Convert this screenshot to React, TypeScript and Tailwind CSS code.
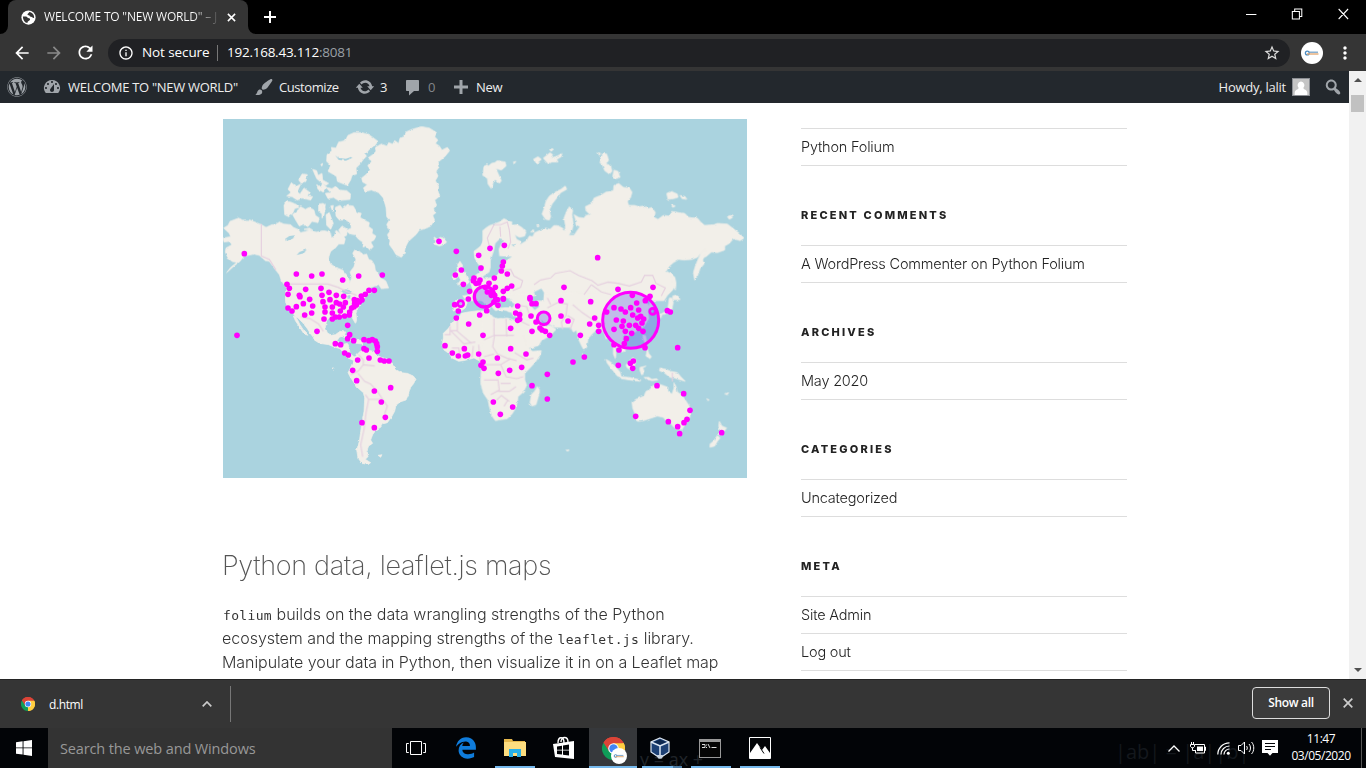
import React from 'react';
import { FaWordpress, FaEdgeLegacy } from 'react-icons/fa6';
import { MdOutlineStarBorder, MdArrowBack, MdArrowForward, MdRefresh, MdInfoOutline, MdMoreVert } from 'react-icons/md';

const UI = "font-['Open_Sans','Noto_Sans',sans-serif]";

function DashIcon({ d }: { d: string }) {
  return (
    <svg viewBox="0 0 20 20" className="h-5 w-5 shrink-0 fill-[#a0a5aa]">
      <path d={d} />
    </svg>
  );
}

const DASHBOARD =
  'M3.76 16h12.48A7.998 7.998 0 0 0 10 3a7.998 7.998 0 0 0-6.24 13zM10 4c.55 0 1 .45 1 1s-.45 1-1 1-1-.45-1-1 .45-1 1-1zM6 6c.55 0 1 .45 1 1s-.45 1-1 1-1-.45-1-1 .45-1 1-1zm8 0c.55 0 1 .45 1 1s-.45 1-1 1-1-.45-1-1 .45-1 1-1zm-5.37 5.55L12 7v6c0 1.1-.9 2-2 2s-2-.9-2-2c0-.57.24-1.08.63-1.45zM4 10c.55 0 1 .45 1 1s-.45 1-1 1-1-.45-1-1 .45-1 1-1zm12 0c.55 0 1 .45 1 1s-.45 1-1 1-1-.45-1-1 .45-1 1-1z';
const BRUSH =
  'M18.33 3.57s.27-.8-.31-1.36c-.53-.52-1.22-.24-1.22-.24-.61.3-5.76 3.47-7.67 5.57-.86.96-2.06 3.79-1.09 4.82.92.98 3.96-.17 4.79-1 2.06-2.06 5.21-7.17 5.5-7.79zM1.4 17.65c2.37-1.56 1.46-3.41 3.23-4.64.93-.65 2.22-.62 3.08.29.63.67.8 2.57-.16 3.46-1.57 1.45-4 1.55-6.15.89z';
const UPDATE =
  'M10.2 3.28c3.53 0 6.43 2.61 6.92 6h2.08l-3.5 4-3.5-4h2.32c-.45-1.97-2.21-3.45-4.32-3.45-1.45 0-2.73.71-3.54 1.78L4.95 5.66C6.23 4.2 8.11 3.28 10.2 3.28zm-.4 13.44c-3.52 0-6.43-2.61-6.92-6H.8l3.5-4c1.17 1.33 2.33 2.67 3.5 4H5.48c.45 1.97 2.21 3.45 4.32 3.45 1.45 0 2.73-.71 3.54-1.78l1.71 1.95c-1.28 1.46-3.15 2.38-5.25 2.38z';
const COMMENT = 'M4 3h11c.6 0 1 .4 1 1v9c0 .6-.4 1-1 1h-4l-5 4.500v-4.500H4c-.6 0-1-.4-1-1V4c0-.6.4-1 1-1z';
const PLUS = 'M17 8.500v3h-5.500V17h-3v-5.500H3v-3h5.500V3h3v5.500z';
const SEARCH =
  'M12.14 4.18c1.87 1.87 2.11 4.75.72 6.89.12.1.22.21.36.31.2.16.47.36.81.59.34.24.56.39.66.47.42.31.73.57.94.78.32.32.6.65.84 1 .25.35.44.69.59 1.04.14.35.21.68.18 1-.02.32-.14.59-.36.81s-.49.34-.81.36c-.31.02-.65-.04-.99-.19-.35-.14-.7-.34-1.04-.59-.35-.24-.68-.52-1-.84-.21-.21-.47-.52-.77-.93-.1-.13-.25-.35-.47-.66-.22-.32-.4-.57-.56-.78-.16-.2-.29-.35-.44-.5-2.07 1.09-4.69.76-6.44-.98-2.14-2.15-2.14-5.64 0-7.78 2.15-2.15 5.63-2.15 7.78 0zm-1.41 6.36c1.36-1.37 1.36-3.58 0-4.95-1.37-1.37-3.59-1.37-4.95 0-1.37 1.37-1.37 3.58 0 4.95 1.36 1.37 3.58 1.37 4.95 0z';

function KeyBadge({ className }: { className: string }) {
  return (
    <svg viewBox="0 0 22 22" className={className}>
      <circle cx="11" cy="11" r="11" fill="#fff" />
      <circle cx="6.300" cy="11" r="1.900" fill="none" stroke="#4a8ac0" strokeWidth="1.300" />
      <path d="M8 10.200h9" stroke="#6d9cc4" strokeWidth="1.200" />
      <path d="M6 12h11.500" stroke="#e2a56b" strokeWidth="1.300" />
    </svg>
  );
}

function ChromeLogo({ className }: { className: string }) {
  return (
    <svg viewBox="0 0 24 24" className={className}>
      <path d="M12 12 1.600 6A12 12 0 0 1 22.400 6z" fill="#db4437" />
      <path d="M12 12 22.400 6A12 12 0 0 1 12 24z" fill="#ffcd40" />
      <path d="M12 12v12A12 12 0 0 1 1.600 6z" fill="#0f9d58" />
      <path d="M12 6.500h10.700L22.400 6A12 12 0 0 0 1.600 6l5.600 8.700z" fill="#db4437" />
      <path d="M16.800 14.700 12 24A12 12 0 0 0 22.700 6.500H12z" fill="#ffcd40" />
      <circle cx="12" cy="12" r="5.500" fill="#fff" />
      <circle cx="12" cy="12" r="4.400" fill="#4285f4" />
    </svg>
  );
}

function TitleBar() {
  return (
    <div className="flex h-[34px] bg-black pl-2">
      <div className="relative flex h-[34px] w-60 items-center rounded-t-lg bg-[#353535] pl-[13px]">
        <svg viewBox="0 0 8 8" className="absolute -left-2 bottom-0 h-2 w-2 fill-[#353535]">
          <path d="M8 0v8H0a8 8 0 0 0 8-8z" />
        </svg>
        <svg viewBox="0 0 8 8" className="absolute -right-2 bottom-0 h-2 w-2 fill-[#353535]">
          <path d="M0 0v8h8a8 8 0 0 1-8-8z" />
        </svg>
        <svg viewBox="0 0 16 16" className="h-[15px] w-[15px] shrink-0">
          <circle cx="8" cy="8" r="7.600" fill="#fff" />
          <path
            d="M2 6.800h3.200c1.600.2 1.700 1.800 3.300 1.900 1.300 0 1.500 1.300.7 2.200-.8.800-2.200.8-2.400 2.900C4 13.300 2 11 2 6.800z M9 2l-1.400 1.600c-1.200.3-.8 2 .5 2 1.700 0 .8 1.700 2.500 1.700 1.700 0 1.200 1.400 3.400 1.200C14.300 4.900 12 2.400 9 2z"
            fill="#353535"
          />
        </svg>
        <div className={`${UI} ml-2 w-[176px] whitespace-nowrap bg-[linear-gradient(90deg,#fff_84%,#353535_101%)] bg-clip-text text-xs tracking-[-0.2px] text-transparent`}>
          WELCOME TO "NEW WORLD" – J
        </div>
        <svg viewBox="0 0 10 10" className="ml-[7px] h-[9px] w-[9px] fill-none stroke-white">
          <path d="M1 1l8 8M9 1l-8 8" strokeWidth="1.700" />
        </svg>
      </div>
      <svg viewBox="0 0 12 12" className="ml-4 mt-[11px] h-3 w-3 stroke-white">
        <path d="M6 0v12M0 6h12" strokeWidth="2" />
      </svg>
      <div className="ml-auto flex items-start pt-2">
        <svg viewBox="0 0 110 12" className="mr-4 h-3 w-[104px] fill-none stroke-white" preserveAspectRatio="none">
          <path d="M0 6.500h11M49 3.500h7.500v7.500H49zM51.500 3.500v-2.500h7.500v7.500h-2.500M98 1l10 10M108 1l-10 10" strokeWidth="1.100" />
        </svg>
      </div>
    </div>
  );
}

function Toolbar() {
  return (
    <div className="flex h-[37px] items-center bg-[#353535] text-white">
      <MdArrowBack className="ml-3 h-5 w-5" />
      <MdArrowForward className="ml-3 h-5 w-5 text-[#8a8a8a]" />
      <MdRefresh className="ml-[11px] h-[21px] w-[21px]" />
      <div className={`${UI} ml-3 flex h-7 w-[1182px] items-center rounded-full bg-[#202124] text-sm`}>
        <MdInfoOutline className="ml-2.5 h-4 w-4" />
        <span className="ml-2 w-[68px] whitespace-nowrap text-[13.500px] tracking-[-0.1px]">Not secure</span>
        <span className="ml-[7px] h-4 w-px bg-[#777]" />
        <span className="ml-[9px] whitespace-nowrap text-[13.500px] tracking-[-0.25px]">
          192.168.43.112<span className="text-[#9aa0a6]">:8081</span>
        </span>
        <MdOutlineStarBorder className="ml-auto mr-[9px] h-[18px] w-[18px] text-[#ddd]" />
      </div>
      <KeyBadge className="ml-[11px] h-[22px] w-[22px]" />
      <MdMoreVert className="ml-3 h-5 w-5" />
    </div>
  );
}

function AdminBar() {
  return (
    <div className={`${UI} flex h-8 items-center whitespace-nowrap bg-[#23282d] text-[13px] text-[#eee]`}>
      <FaWordpress className="ml-[7px] h-5 w-5 shrink-0 text-[#a0a5aa]" />
      <div className="ml-[15px] flex w-[212px] items-center">
        <DashIcon d={DASHBOARD} />
        <span className="ml-1.5 pt-px tracking-[-0.3px]">WELCOME TO "NEW WORLD"</span>
      </div>
      <div className="flex w-[101px] items-center">
        <DashIcon d={BRUSH} />
        <span className="ml-[5px] pt-px tracking-[-0.42px]">Customize</span>
      </div>
      <div className="flex w-12 items-center">
        <DashIcon d={UPDATE} />
        <span className="ml-[5px] pt-px">3</span>
      </div>
      <div className="flex w-12 items-center">
        <DashIcon d={COMMENT} />
        <span className="ml-[5px] pt-px text-[#82868b]">0</span>
      </div>
      <div className="flex items-center">
        <DashIcon d={PLUS} />
        <span className="ml-[5px] pt-px tracking-[-0.3px]">New</span>
      </div>
      <span className="ml-auto pt-px tracking-[-0.25px]">Howdy, lalit</span>
      <svg viewBox="0 0 18 18" className="ml-1.5 h-[18px] w-[18px]">
        <path d="M0 0h18v18H0z" fill="#8c8f94" />
        <path d="M1 1h16v16H1z" fill="#c5c5c5" />
        <path d="M9 3.500a3.500 3.800 0 0 1 2.300 6.600c.3 1.800 4 1.500 4 4.900v2H2.700v-2c0-3.400 3.700-3.100 4-4.900A3.500 3.800 0 0 1 9 3.500z" fill="#fff" />
      </svg>
      <div className="ml-[13px] mr-[6px]">
        <DashIcon d={SEARCH} />
      </div>
    </div>
  );
}

/* Map drawing: each quadrant of the world has its own origin, three units to the pixel. */
const LAND_NW = [
  'M419 180L432 170 445 155 437 142 450 130 438 120 452 110 462 100 460 88 478 78 495 84 500 74 512 78 518 68 530 76 534 60 548 56 552 42 570 34 598 26 622 30 644 44 638 56 648 66 640 76 652 84 660 96 676 88 683 98 670 114 656 126 648 132 652 146 642 160 648 174 640 188 650 204 648 220 654 234 638 246 644 262 634 272 642 284 632 292 638 306 626 324 610 332 592 336 582 350 568 362 558 372 550 388 546 408 538 418 522 410 514 396 502 380 504 368 496 350 504 340 494 320 502 306 494 296 492 268 484 240 470 224 448 216 430 220 424 210 436 200 422 192z',
  'M315 110L330 98 328 88 342 90 350 72 370 68 378 52 396 44 420 44 440 50 452 58 468 70 456 86 440 96 436 112 424 124 414 138 402 150 404 168 390 172 386 186 376 202 360 196 346 190 344 176 332 168 318 160 326 142 314 130z',
  'M198 214L208 194 222 206 236 198 226 220 208 224zM230 186L240 168 256 170 252 190 238 196zM272 154L284 158 288 172 300 166 302 186 320 196 312 202 296 192 284 182z',
  'M194 234L218 214 234 228 246 210 262 222 256 234 272 236 266 246 240 240 226 246 210 236zM284 200L296 208 302 196 314 208 304 222 288 214zM312 208L330 212 342 204 352 216 374 218 386 228 384 244 350 248 334 238 318 242 310 226 326 224z',
  'M186 262L192 250 206 252 224 260 232 268 218 272 212 286 200 296 188 290zM212 290L228 276 236 266 250 274 262 268 276 276 280 292 292 300 288 314 270 310 258 326 244 318 232 324 222 308zM290 258L304 256 310 274 302 288 290 280zM312 290L322 284 328 300 334 316 326 334 314 322z',
  'M340 268L354 262 362 272 374 262 394 264 404 282 418 286 414 298 430 308 442 314 440 326 452 334 450 346 462 354 456 366 446 372 454 386 444 396 432 384 420 388 422 372 410 364 398 350 384 348 372 338 388 330 386 316 372 306 352 306 342 294zM350 336L360 324 376 334 374 352 362 358z',
  'M300 262L310 258 306 292 300 300zM326 264L334 262 332 280zM246 334L262 330 272 336zM296 140L302 136 300 144z',
  'M5 330L18 322 24 310 50 300 62 306 84 306 118 320 132 328 150 320 160 320 172 312 186 318 206 320 214 328 228 334 236 344 252 340 262 336 284 342 306 338 330 344 344 338 358 350 370 362 366 378 350 378 340 390 326 400 320 418 324 436 340 448 362 456 378 476 384 492 390 478 384 462 396 446 402 424 392 406 398 396 412 400 424 410 434 408 440 424 450 428 458 442 460 456 470 470 482 482 492 490 500 510 478 512 470 500 448 508 430 524 404 545H192L194 510 178 488 172 470 158 452 142 430 130 428 112 412 96 408 78 412 66 414 54 430 36 444 14 464 26 448 44 434 30 430 18 420 10 402 12 390 30 380 22 370 6 372 4 360 26 356 22 346z',
  'M632 360L638 358 646 364 654 358 664 360 674 372 666 380 652 384 638 378 642 368z',
  'M704 438L714 430 722 442 718 454 730 466 736 480 742 492 734 500 706 500 716 486 708 470zM694 466L708 462 710 474 698 486 690 478z',
  'M758 420L756 400 776 384 792 352V440H770zM744 490L760 472 778 460H792V548H734L722 534 744 530 752 514z',
  'M786 145L796 140V180L788 172z',
];
const LAND_NE = [
  'M-4 338L8 328 18 322 30 318 46 312 60 302 72 308 84 312 82 322 100 320 116 330 126 342 122 354 106 358 92 350 98 364 110 370 108 380 128 368 136 354 146 356 152 344 170 336 186 330 198 334 210 322 224 324 238 332 244 340 244 320 240 300 248 280 256 266 266 276 264 290 268 320 264 336 254 352 270 352 282 334 288 326 276 320 274 302 270 290 284 298 300 300 306 292 318 290 306 278 304 266 324 256 330 240 350 232 366 222 388 218 390 202 404 196 418 208 436 210 444 222 440 238 430 250 434 262 452 262 464 266 480 264 492 272 504 268 514 284 510 298 522 304 538 292 556 294 566 280 584 284 602 286 614 298 640 300 650 312 662 322 690 320 700 316 730 318 748 332 766 346 780 360 768 368 748 362 736 376 722 384 722 396 700 404 682 402 666 416 652 420 662 404 648 408 640 418 624 424 600 426 584 424 568 434 556 444 546 460 560 466 572 478 576 496 566 516 550 532 540 548H-4z',
  'M655 398L666 392 664 408 656 426 660 438 648 452 640 474 632 486 628 464 634 444 642 424z',
  'M185 304L174 288 180 272 186 250 196 234 214 222 230 214 244 204 248 214 230 224 218 240 204 258 196 276 200 296 196 306z',
  'M0 148L16 142 22 136 32 134 40 128 64 132 66 144 52 156 36 152 42 166 52 188 46 196 34 184 28 192 22 212 12 198 10 180 -4 172z',
  'M352 118L358 106 368 108 374 126 366 138 380 142 384 160 376 168 362 158 356 142 348 134zM386 176L390 156 402 160 408 178 396 182zM548 226L562 220 580 228 582 238 568 242 552 244zM588 232L604 236 608 244 594 242zM562 260L574 264 566 268zM730 296L740 292 746 298 736 304z',
  'M148 124L162 116 172 124 158 136zM178 120L198 104 206 110 200 120 220 114 234 106 232 116 218 124 222 132 202 132 194 138 184 128zM196 94L210 92 202 100zM88 132L96 130 90 138zM140 342L148 334 150 342zM158 322L166 322 162 328zM342 104L350 106 346 112z',
  'M562 472L572 478 576 502 574 516 566 500zM566 534L580 530 588 545H566z',
];
const LAND_SW = [
  'M190-20v30l6 22 14 10 16 22 8 16 12 18 12 14-12-4-14-22-12-18-6-14 14 6 14 14 14 18 10 16 8 10 0 6 18 12 28 4 14 6 20 6 10 12 14 16 18 8 8-4 8 4-2-10-14-2-12-10-2-14-6-16-18 4-14-10 8-12 14-6 6-10-18-2-14 10-12 2-12-8-6-16 4-20 10-10 20-6 18-2 10 2 14-6 6 16 8 14 4-12-2-18 6-16 16-26 20-20V-20z',
  'M352 112l16-2 22 14 12 4-6 4-16-6-14-8zM398 128l14-2 12 6-4 6-18-2zM330 210l6 0-2 4zM468 472l12-2-4 8z',
  'M400 176L410 164 420 156 426 154 430 162 438 156 454 160 466 172 478 178 498 184 510 198 524 216 538 224 556 226 574 234 582 244 574 258 566 268 560 288 552 306 534 312 522 322 518 340 508 358 496 374 482 378 476 388 462 396 452 410 446 426 452 436 440 444 434 460 438 476 430 484 446 494 438 500 420 496 408 480 404 456 412 430 416 400 420 374 426 340 428 300 424 284 408 270 396 254 384 236 378 224 384 212 390 198z',
  'M800 40v168l-18 0-8-18-18-10-14 4-18 4-14 2-20-10-10-14-14-10-6-14 4-22 0-14 14-14 8-10 10-18 14-4 8-14 20-4 30-4z M694 14l10-6 34 0-8 22-14 10-20-2zM738-20h60v34l-18-14-22 8z',
];
const LAND_SE = [
  'M-6-10v18l16 18-6 16 12-6 4-14 12 14 12 6 10-6 14 2 12 14 14 2 10 6-4 18-2 14 4 8 14 20 6 20 6 10 18-2 18-6 8-14 28-16 16-18-14-10-10-2-4 4-14-8-4-14 22 12 22 12 30 0 16 0 8 14 10-6 4 24 10 22 8 14 8-8 4-26 14-16 14-12 14-2 8 16 4 14 10-4 6 14 6 16 0 20 6 14 2-14-2-22 12 6 8 10 10-4 2-18-10-16 2-14 16 4 28-18 18-10 14-24-2-24 4-14-14-16 8-10 10-8 4-12z',
  'M-2 285L-10 255-8 215-10 170-6 40 18 46 28 58 42 62 66 58 82 64 98 68 104 84 112 104 122 122 128 142 140 156 146 160 172 158 168 172 154 192 136 212 122 226 122 244 128 262 118 282 102 296 100 312 94 332 84 348 70 362 34 368 24 354 16 326 12 306z',
  'M160 266l6 8 0 12-10 34-12 4-6-10 4-24 10-10z',
  'M366 184l14 8 16 16 12 14 4 16-12-4-16-20-14-18zM408 236l24 2 20 4 18 4-2 4-30-4-26-4zM430 196l8-6 8-12 10 8-4 16-10 14-12-6-4-8zM468 208l18-4-10 6 4 8-6 14-6-14zM480 238l14 0 10 6 14-2 4 4-18 2-16-4zM528 210l18 4 14 6 20 4 12 14 12 12-20-6-12-4-14-2-18-14-14-6zM490 152l4 14 8 10-4 6-12-8zM476 114l8-2 6 26-8-4zM296 166l8 6-2 10-6-4z',
  'M444 312L456 304 480 294 486 280 498 274 508 262 524 258 542 264 552 268 552 280 564 288 570 270 570 254 576 266 580 282 594 292 604 306 616 324 620 340 616 360 604 378 594 394 578 394 566 384 558 372 546 368 538 358 520 354 490 364 478 368 462 370 452 364 454 350 446 330z',
  'M582 402l12-2-2 12-8 2z',
  'M706 370l8 14 14 6-8 10-8 12-8-2 4-14-4-12zM700 412l8 8-8 10-8 14-14 4 0-10 12-10zM556 0h8l4 14-4 20-20 14-16 2 14-8 10-14zM526 48l8 2-4 10zM498 2l8 24 2 16-8 4-4-18zM668 302l8 4-4 2zM722 288l12-4-4 6zM246 456l10 0-6 4z',
];

const WATER_NW =
  'M190 362l12-8 18-2-8 10-20 8zM224 412l8-10 22-8-8 12-18 4zM356 518l16-4 20 6-6 8-18 0zM376 534l8-4 2 10-8 4zM340 112L350 120 372 122 388 116 390 120 372 128 350 126zM324 338L338 332 340 346 330 360zM376 392L388 384 392 396 384 404zM334 200L350 200 384 208 384 213 350 210zM430 108L456 84 460 86 436 116z';
const WATER_NE = 'M30 398l4-22 12-12 14 4-10 12-6 14 2 20 26 2 12 0-18 12-14 4-2 22-12 18-18 6-18 4-6-6 10-6 10-8 4-14 0-22zM82 380l12-2-4 8zM150 522l22-10 8 12-2 24-20 0zM32 545l22-8 32 8z';
const WATER_SE = 'M28 18l10-18 34 4 20 14-6 10-24 0-20 2zM134-4l28-2-4 14 8 18-14 10-10-12 0-16zM22 48l20-12 40 8 6 12-32 4z';

const BORDERS_NW = 'M118 318v96l24 10 20 32M200 498h118l30 10 30 14 26 10';
const BORDERS_NE = 'M20 400l-10-40 20-40 20 0 20-8 6 24 4 36-8 20M50 356l-2-30M60 456l20-2 10 20 26 14-6 20-24 10M150 500l20-14 30-6 14-14 44-8 26 14 40 16 18 14 30-10 30 4 34 8 36-12 10-20 24 0 10 24 28 14-12 24M322 500l30 22 30 8M322 500l-22 30';
const BORDERS_SW = 'M236 56l28 6 26 16 14 22M410 170l14 16 0 14-16 20-22 10M424 200l34 4M408 226l20 24 18 8 20 22 16 24 14 20-8 24M430 290l10 14 20 0 18 0M440 304l-8 40-6 50-10 46 6 36M668 110h16l0-26M706 62l0 36-20 0 40 40 34-6M704 98l44 38M690 150l20 0 6 34M730 182l0-34M750 178l4-34M770 140l4 50';
const BORDERS_SE = 'M30 62l0 50-30 14M30 112h60M32 110l-6 36 14 22 28 12 30 8M66 62l2 54M0 176l30-8M0 200h50l30-18M92 164l36 22 20-6M50 200l16 36 32 6 20-6M0 246h42l4 30-26 14M42 280h34l20-14M38 306l14-14 24 18M50 256h30M60 325l12-20M94 20l34 6 6 20M110 36l-4 32 30 14M190 30l30-16 30 4-4 34-14 20 4 22M250 52l20 12-12 30M290 40l-24-20M290 40l40 28 24 6 0 30M200 20l-10-20M354 100l8-26M565 224v26';

const DOTS_NW: [number, number][] = [
  [67, 407], [223, 468], [269, 474], [300, 468], [362, 486], [410, 474], [481, 471], [195, 499], [202, 511], [198, 529], [232, 532], [251, 514], [297, 511], [321, 523], [300, 532], [343, 532], [365, 535], [418, 534], [430, 529], [441, 517], [457, 517],
  [651, 370], [703, 400], [770, 412], [777, 450], [718, 456], [700, 471], [724, 499], [754, 488], [762, 496], [774, 486], [743, 520], [756, 480], [770, 495],
];
const DOTS_NE: [number, number][] = [
  [18, 391], [61, 382], [58, 432], [55, 444], [52, 459], [70, 468], [31, 480], [15, 496], [34, 508], [83, 504], [70, 511], [58, 520], [240, 508], [341, 419], [402, 514], [507, 508], [445, 532], [498, 535], [138, 539], [4, 508], [10, 522], [24, 520], [32, 532], [22, 532], [58, 542],
];
const DOTS_SW: [number, number][] = [
  [45, 112], [198, 30], [210, 39], [223, 26], [244, 17], [263, 4], [272, 24], [248, 51], [269, 45], [285, 100], [234, -4], [303, 11], [324, 5], [309, 27], [309, 42], [306, 63], [331, 27], [331, 45], [331, 63], [343, 14], [353, 18], [364, 27], [355, 39], [370, 14], [340, 57], [352, 57], [368, 54], [382, 51], [383, 42], [389, 30], [396, 26], [398, 16], [403, 21], [406, 8], [412, 12], [420, 6], [397, 5],
  [377, 82], [383, 110], [377, 122], [395, 128], [340, 137], [356, 140], [368, 165], [379, 171], [426, 125], [441, 128], [451, 125], [460, 129], [464, 137], [466, 146], [466, 160], [426, 152], [433, 156], [475, 186], [487, 189], [501, 189], [407, 186], [441, 180], [392, 217], [404, 248], [457, 279], [506, 269], [478, 312], [490, 358], [420, 374], [457, 389],
  [698, 20], [709, 39], [703, 60], [740, 78], [773, 51], [783, 112], [669, 143], [691, 165], [709, 174], [727, 152], [730, 174], [737, 171], [770, 168], [783, 192], [777, 202], [786, 211], [739, 3],
];
const DOTS_SE: [number, number][] = [
  [8, 38], [40, 5], [42, 22], [30, 12], [58, 3], [101, 24], [95, 45], [107, 50], [101, 67], [107, 64], [80, 91], [144, 17], [156, 17], [138, 3], [141, 54], [156, 72], [144, 100], [168, 90], [174, 96], [184, 100], [197, 112], [231, 8], [231, 54], [252, 69], [320, 11], [332, 60], [317, 78], [344, 82], [344, 100], [289, 112], [267, 192], [301, 177],
  [40, 180], [80, 152], [126, 168], [77, 217], [113, 208], [43, 226], [190, 229], [190, 303], [144, 263], [28, 312], [49, 349], [86, 327],
  [368, 42], [390, 29], [411, 33], [424, 42], [440, 29], [458, 15], [464, 36], [446, 51], [461, 60], [470, 55], [479, 63], [474, 75], [397, 66], [418, 69], [414, 85], [436, 82], [455, 82], [464, 91], [477, 100], [390, 94], [424, 100], [443, 106], [427, 122], [421, 137], [390, 140], [405, 156], [483, 149], [484, 8], [550, 38], [559, 42], [581, 149],
  [403, 202], [448, 189], [439, 196], [446, 211], [519, 263], [599, 287], [618, 337], [609, 364], [600, 374], [553, 371], [581, 386], [587, 407], [455, 355], [713, 404],
];

const QUADRANTS = [
  { at: 'translate(0 0)', land: LAND_NW, water: WATER_NW, borders: BORDERS_NW, dots: DOTS_NW },
  { at: 'translate(786 0)', land: LAND_NE, water: WATER_NE, borders: BORDERS_NE, dots: DOTS_NE },
  { at: 'translate(0 540)', land: LAND_SW, water: '', borders: BORDERS_SW, dots: DOTS_SW },
  { at: 'translate(786 540)', land: LAND_SE, water: WATER_SE, borders: BORDERS_SE, dots: DOTS_SE },
];

function WorldMap() {
  return (
    <svg viewBox="3 3 1572 1077" preserveAspectRatio="none" className="block h-[359px] w-[524px] bg-[#aad3df]">
      <defs>
        <filter id="coast" x="0" y="0" width="1" height="1" colorInterpolationFilters="sRGB">
          <feTurbulence type="fractalNoise" baseFrequency="0.07" numOctaves="2" seed="4" result="n" />
          <feDisplacementMap in="SourceGraphic" in2="n" scale="7" xChannelSelector="R" yChannelSelector="G" />
        </filter>
      </defs>
      <g filter="url(#coast)">
        {QUADRANTS.map((q) => (
          <g key={q.at} transform={q.at}>
            {q.land.map((d) => (
              <path key={d} d={d} fill="#f2efe9" stroke="#f2efe9" strokeWidth="2" strokeLinejoin="round" />
            ))}
          </g>
        ))}
        {QUADRANTS.map((q) => (
          <path key={q.at} d={q.water} transform={q.at} fill="#aad3df" />
        ))}
      </g>
      {QUADRANTS.map((q) => (
        <path key={q.at} d={q.borders} transform={q.at} fill="none" stroke="#e5d0df" strokeWidth="3.500" />
      ))}
      <g fill="#3a3ae8" fillOpacity="0.27" stroke="#ff00ff">
        <circle cx="1226" cy="607" r="84" strokeWidth="9" />
        <circle cx="965" cy="601" r="19" strokeWidth="9" />
        <circle cx="788" cy="536" r="31" strokeWidth="10" />
        <circle cx="716" cy="557" r="9" strokeWidth="8" />
        <circle cx="1292" cy="580" r="9" strokeWidth="8" />
      </g>
      {QUADRANTS.map((q) => (
        <g key={q.at} transform={q.at} fill="#ff00ff">
          {q.dots.map(([x, y]) => (
            <circle key={`${x}-${y}`} cx={x} cy={y} r="8.500" />
          ))}
        </g>
      ))}
    </svg>
  );
}

function Widget({ title, items }: { title: string; items: string[] }) {
  return (
    <section>
      {title && <h2 className="flex h-[79px] items-center pt-[19px] font-['Inter','Liberation_Sans',sans-serif] text-[11px] font-extrabold uppercase tracking-[2.2px] text-[#222]">{title}</h2>}
      <ul className="border-t border-[#ddd]">
        {items.map((t) => (
          <li key={t} className="flex h-[37px] items-center border-b border-[#ddd] pb-px text-[14.500px] tracking-[-0.2px] text-[#222]">
            {t}
          </li>
        ))}
      </ul>
    </section>
  );
}

function Code({ children }: { children: string }) {
  return <code className="font-['DejaVu_Sans_Mono',monospace] text-[13px] font-normal leading-none tracking-[0.34px]">{children}</code>;
}

function PageContent() {
  return (
    <div className="flex h-[576px] overflow-hidden bg-white pl-[223px] font-['Inter','Liberation_Sans',sans-serif] font-light">
      <main className="w-[524px] shrink-0 pt-4">
        <WorldMap />
        <h2 className="-ml-px mt-[68px] flex h-10 items-center whitespace-nowrap text-[27px] font-extralight tracking-[-0.31px] text-[#555]">Python data, leaflet.js maps</h2>
        <div className="mt-4 whitespace-nowrap text-base leading-6 text-[#333]">
          <p className="h-6 tracking-[0px]">
            <Code>folium</Code> builds on the data wrangling strengths of the Python
          </p>
          <p className="-ml-px h-6 tracking-[-0.020px]">
            ecosystem and the mapping strengths of the <Code>leaflet.js</Code> library.
          </p>
          <p className="-ml-px h-6 tracking-[-0.060px]">Manipulate your data in Python, then visualize it in on a Leaflet map</p>
        </div>
      </main>
      <aside className="ml-[54px] w-[326px] pt-[25px]">
        <Widget title="" items={['Python Folium']} />
        <Widget title="Recent Comments" items={['A WordPress Commenter on Python Folium']} />
        <Widget title="Archives" items={['May 2020']} />
        <Widget title="Categories" items={['Uncategorized']} />
        <Widget title="Meta" items={['Site Admin', 'Log out']} />
      </aside>
    </div>
  );
}

function Scrollbar() {
  return (
    <div className="flex w-[17px] shrink-0 flex-col items-center justify-between bg-[#f1f1f1]">
      <div className="flex flex-col items-center">
        <svg viewBox="0 0 8 4" className="mt-[7px] h-1 w-2 fill-[#505050]">
          <path d="M0 4h8L4 0z" />
        </svg>
        <div className="mt-[13px] h-[17px] w-[13px] bg-[#c1c1c1]" />
      </div>
      <svg viewBox="0 0 8 4" className="mb-[7px] h-1 w-2 fill-[#505050]">
        <path d="M0 0h8L4 4z" />
      </svg>
    </div>
  );
}

function DownloadShelf() {
  return (
    <div className={`${UI} flex h-[49px] items-center border-t border-[#242424] bg-[#353535] text-xs text-white`}>
      <ChromeLogo className="ml-[21px] h-[14px] w-[14px]" />
      <span className="ml-3.5 w-[153px] pt-0.5 font-medium tracking-[-0.4px]">d.html</span>
      <svg viewBox="0 0 10 6" className="h-1.5 w-2.5 fill-none stroke-[#ccc]">
        <path d="M.7 5.300 5 1l4.300 4.300" strokeWidth="1.700" />
      </svg>
      <span className="ml-[18px] h-9 w-px bg-[#777]" />
      <span className="mb-0.5 ml-auto flex h-8 w-[78px] items-center justify-center rounded border border-[#ddd] bg-[#3c3c3c] font-semibold tracking-[-0.350px]">Show all</span>
      <svg viewBox="0 0 10 10" className="mb-0.5 ml-[13px] mr-[13px] h-2.5 w-2.5 stroke-[#ccc]">
        <path d="M.7.7l8.600 8.600M9.300.7.7 9.300" strokeWidth="1.700" />
      </svg>
    </div>
  );
}

function Slot({ children, className = 'w-[49px]', bar = '' }: { children: React.ReactNode; className?: string; bar?: string }) {
  return (
    <div className={`flex h-10 shrink-0 flex-col items-center ${className}`}>
      <div className="flex h-[38px] items-center pt-0.5">{children}</div>
      <div className={`h-0.5 ${bar}`} />
    </div>
  );
}

function Taskbar() {
  return (
    <div className={`${UI} relative isolate flex h-10 overflow-hidden bg-[#020407] text-white`}>
      {/* Wallpaper formulas showing faintly through the translucent bar */}
      <span className="absolute left-[640px] top-[22px] -z-10 whitespace-nowrap text-lg leading-none text-[#20242a]">y = ax +</span>
      <span className="absolute left-[1115px] top-[14px] -z-10 whitespace-nowrap text-xl leading-none text-[#14181d]">|ab| = |a||b|</span>
      <div className="flex w-12 items-center justify-center">
        <svg viewBox="0 0 16 16" className="h-4 w-4 fill-white">
          <path d="M0 2.200 6.600 1.300v6.200H0zM7.500 1.200 16 0v7.500H7.500zM0 8.300h6.600v6.300L0 13.700zM7.500 8.300H16V16l-8.500-1.200z" />
        </svg>
      </div>
      <div className="w-[344px] bg-[#333] pl-3 pt-px text-[14.500px] leading-10 tracking-[-0.130px] text-[#989898]">Search the web and Windows</div>
      <Slot className="w-12">
        <svg viewBox="0 0 20 14" className="h-3.5 w-5 fill-none stroke-white">
          <path d="M4.500.5h11v13h-11zM2.800 2.500H.5v9h2.300M17.200 2.500h2.300v9h-2.300" />
        </svg>
      </Slot>
      <Slot className="w-[51px]">
        <FaEdgeLegacy className="h-[22px] w-[22px] text-[#0f7cdb]" />
      </Slot>
      <Slot className="w-12" bar="w-10 bg-[#76b9ed]">
        <svg viewBox="0 0 22 20" className="h-5 w-[22px]">
          <path d="M0 1h8l1 2h12v15H0z" fill="#e6b84c" />
          <path d="M0 4h22v14H0z" fill="#fddd7f" />
          <path d="M5 19v-8h12v8h-4v-4H9v4z" fill="#29b0e8" />
        </svg>
      </Slot>
      <Slot className="w-[50px]">
        <svg viewBox="0 0 22 24" className="h-6 w-[22px]">
          <path d="M5 7c0-7 6-7 6 0M8 6c0-6 7-6 7 0" fill="none" stroke="#fff" strokeWidth="1.400" />
          <path d="M0 8 21 5v18L2 21z" fill="#fff" />
          <path d="M4 10.500l5-.8v4H4zM10 9.500l6-.9v5.100h-6zM4 14.600h5v4l-5-.6zM10 14.600h6v5l-6-.8z" fill="#020407" />
        </svg>
      </Slot>
      <Slot className="w-12 bg-[#36383b]" bar="w-12 bg-[#76b9ed]">
        <div className="relative">
          <ChromeLogo className="h-[23px] w-[23px]" />
          <KeyBadge className="absolute -bottom-1 -right-0.5 h-4 w-4" />
        </div>
      </Slot>
      <Slot className="w-[50px]" bar="w-10 bg-[linear-gradient(90deg,#76b9ed_78%,#4f7fa8_78%)]">
        <svg viewBox="0 0 20 22" className="mr-1 h-[22px] w-5">
          <path d="M10 1 19 5v10l-9 6-9-6V5z" fill="#1d4074" stroke="#dce6f2" strokeWidth="1.200" />
          <path d="M1 5l9 4 9-4M10 9v12" fill="none" stroke="#dce6f2" strokeWidth="1.500" />
          <path d="M4 5l6-2.500L16 5l-6 2.500z" fill="#0d274e" />
          <path d="M7 18h6l-1 3.500H8z" fill="#c9d4e2" />
        </svg>
      </Slot>
      <Slot bar="w-10 bg-[#76b9ed]" className="w-12">
        <svg viewBox="0 0 22 19" className="mr-0.5 h-[19px] w-[22px]">
          <path d="M0 0h22v19H0z" fill="#999" />
          <path d="M1 3h20v15H1z" fill="#050505" />
          <path d="M3 5.500h3v3H3M7.500 5.500v1M7.500 8v1M9 5l2 4M12.500 8.500h5" fill="none" stroke="#ddd" />
        </svg>
      </Slot>
      <Slot className="w-[50px]" bar="w-10 bg-[#76b9ed]">
        <svg viewBox="0 0 22 22" className="h-[22px] w-[22px]">
          <path d="M.5.5h21v21H.5z" fill="#020407" stroke="#fff" />
          <path d="M1 21v-5l7-10 5 7 3-4 5 7v5z" fill="#fff" />
          <path d="M11 10.500l4 6" stroke="#020407" />
        </svg>
      </Slot>
      <div className="ml-auto flex items-center">
        <svg viewBox="0 0 12 7" className="h-[7px] w-3 fill-none stroke-white">
          <path d="M.5 6.500 6 1l5.500 5.500" strokeWidth="1.300" />
        </svg>
        <svg viewBox="0 0 16 12" className="ml-2.5 h-3 w-4 fill-none stroke-white">
          <path d="M5 2.500h9.500v8.500H5.500V8M14.500 5h1v3.500h-1" />
          <path d="M7 4.500h6V9H7z" fill="#fff" stroke="none" />
          <path d="M.5 2.500h4v2l-1.300 1.300H1.800L.5 4.500zM1.500 0v2.500M3.500 0v2.500M2.500 6v2.500H5" />
        </svg>
        <svg viewBox="0 0 13 13" className="ml-[11px] h-[13px] w-[13px] fill-none stroke-white">
          <path d="M.8 12.500C.8 6 6 .8 12.500.8M4 12.500C4 7.800 7.800 4 12.500 4M7 12.500C7 9.500 9.500 7 12.500 7" strokeWidth="1.200" />
          <circle cx="11.300" cy="11.300" r="1.500" fill="#fff" stroke="none" />
        </svg>
        <svg viewBox="0 0 17 14" className="ml-2 h-3.5 w-[17px] fill-none stroke-white">
          <path d="M.5 4.500H3L6.500 1v12L3 9.500H.5zM8.500 5c1 1 1 3 0 4M11 3c2 2 2 6 0 8M13.500 1c3 3 3 9 0 12" />
        </svg>
        <svg viewBox="0 0 16 16" className="ml-[7px] h-4 w-4">
          <path d="M0 0h16v13h-5.500L8 15.800 5.500 13H0z" fill="#fff" />
          <path d="M3 3.500h10M3 6.500h10M3 9.500h6" stroke="#020407" />
        </svg>
        <div className="ml-[13px] w-[60px] whitespace-nowrap text-center text-xs leading-[17px] tracking-[-0.450px]">
          <div className="-mt-0.5">11:47</div>
          <div>03/05/2020</div>
        </div>
        <span className="ml-2.5 mr-1 h-10 w-px bg-[#555]" />
      </div>
    </div>
  );
}

export default function App() {
  return (
    <div className="flex h-[768px] w-[1366px] flex-col overflow-hidden bg-white">
      <TitleBar />
      <Toolbar />
      <div className="flex h-[608px] shrink-0">
        <div className="flex w-[1349px] shrink-0 flex-col">
          <AdminBar />
          <PageContent />
        </div>
        <Scrollbar />
      </div>
      <DownloadShelf />
      <Taskbar />
    </div>
  );
}
